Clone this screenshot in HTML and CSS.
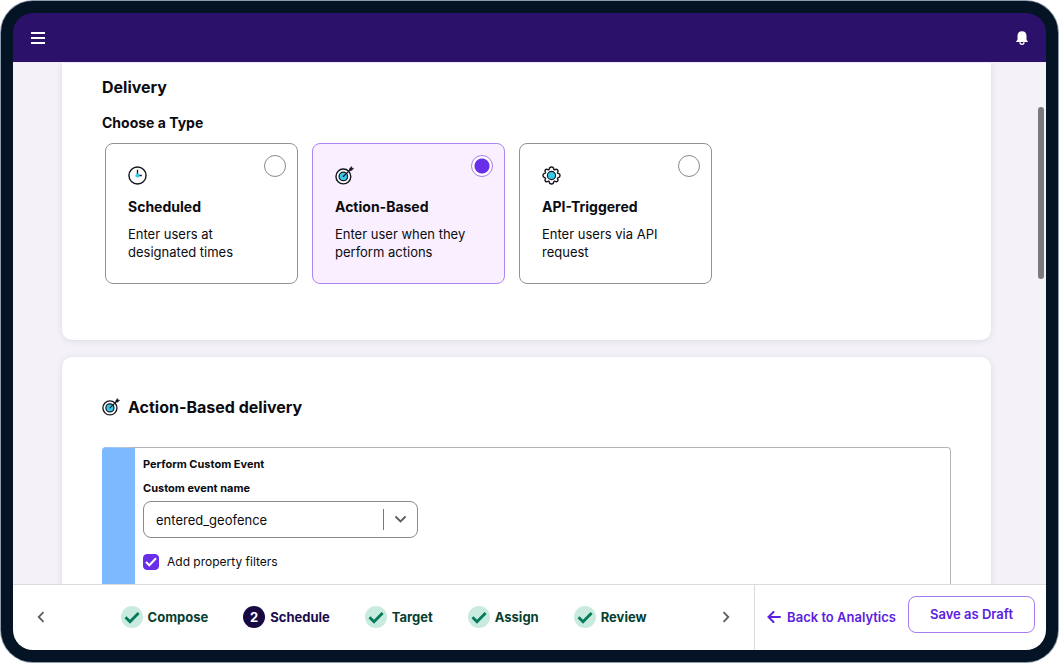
FILE: index.html
```html
<!DOCTYPE html>
<html lang="en">
<head>
<meta charset="utf-8">
<meta name="viewport" content="width=device-width, initial-scale=1.0">
<title>Schedule - Delivery</title>
<link rel="stylesheet" href="styles.css">
</head>
<body>

<!-- shared icons -->
<svg class="sprite" aria-hidden="true">
  <symbol id="icon-target" viewBox="0 0 20 20">
    <circle cx="8.8" cy="11" r="7.8" fill="#fff" stroke="#15151f" stroke-width="1.5"/>
    <circle cx="8.8" cy="11" r="4.5" fill="#38c9ea" stroke="#15151f" stroke-width="1.3"/>
    <path d="M8.8 11L16.5 3.5" stroke="#15151f" stroke-width="1.3" stroke-linecap="round"/>
    <path d="M15.5 4.5V2.5L17.5 0.7V2.5H19.4L17.6 4.5Z" fill="#15151f" stroke="#15151f" stroke-width="0.8" stroke-linejoin="round"/>
  </symbol>
  <symbol id="icon-check" viewBox="0 0 22 22">
    <circle cx="11" cy="11" r="11" fill="#c9ebdf"/>
    <path d="M4.5 11.3L9 15.7L17.6 7" fill="none" stroke="#04795b" stroke-width="2.8"/>
  </symbol>
</svg>

<div class="device">
  <header class="topbar">
    <button class="icon-btn" aria-label="Menu">
      <svg width="14" height="14" viewBox="0 0 14 14"><path d="M0 2H14M0 7H14M0 12H14" stroke="#fff" stroke-width="2"/></svg>
    </button>
    <button class="icon-btn" aria-label="Notifications">
      <svg width="12" height="14" viewBox="0 0 12 14"><path d="M6 0.3C9 0.3 10.5 2.4 10.5 4.8V8.2C10.5 9.1 10.8 9.5 11.8 10.3V11H0.2V10.3C1.2 9.5 1.5 9.1 1.5 8.2V4.8C1.5 2.4 3 0.3 6 0.3Z" fill="#fff"/><path d="M4 11.3A2 2 0 0 0 8 11.3" fill="none" stroke="#fff" stroke-width="1.3"/></svg>
    </button>
  </header>

  <main class="content">
    <section class="panel panel-first">
      <h2>Delivery</h2>
      <h3>Choose a Type</h3>
      <div class="types">
        <label class="type">
          <input type="radio" name="type">
          <svg class="type-icon" viewBox="0 0 20 20"><circle cx="10" cy="10" r="9" fill="#fff" stroke="#15151f" stroke-width="1.5"/><path d="M10 4V10H14.5" fill="none" stroke="#15151f" stroke-width="1.4"/><circle cx="10" cy="10" r="2.2" fill="#38c9ea"/></svg>
          <span class="type-title">Scheduled</span>
          <span class="type-text">Enter users at designated times</span>
        </label>
        <label class="type selected">
          <input type="radio" name="type" checked>
          <svg class="type-icon"><use href="#icon-target"/></svg>
          <span class="type-title">Action-Based</span>
          <span class="type-text">Enter user when they perform actions</span>
        </label>
        <label class="type">
          <input type="radio" name="type">
          <svg class="type-icon" viewBox="0 0 20 20"><path d="M7.7 3.2C7.8 1.5 8.3 1.1 10 1.1S12.2 1.5 12.3 3.2C12.6 4 13.1 4.1 13.8 3.7C15.2 2.9 15.6 3.2 16.5 4.1S17.3 5.3 16.5 6.5C16.2 7.1 16.3 7.5 17 7.8C18.6 8 19 8.5 19 10S18.6 12 17 12.2C16.3 12.5 16.2 13 16.5 13.5C17.3 14.8 17.2 15.2 16.3 16.1S15.2 17.1 13.8 16.3C13.1 15.9 12.6 16 12.3 16.8C12.2 18.5 11.7 18.9 10 18.9S7.8 18.5 7.7 16.8C7.4 16 6.9 15.9 6.2 16.3C4.8 17.1 4.5 16.9 3.6 16S2.7 14.8 3.5 13.5C3.8 13 3.7 12.5 3 12.2C1.4 12 1 11.5 1 10S1.4 8 3 7.8C3.7 7.5 3.8 7 3.5 6.5C2.7 5.2 2.8 4.9 3.6 4S4.8 2.9 6.2 3.7C6.9 4.1 7.4 4 7.7 3.2Z" fill="#fff" stroke="#15151f" stroke-width="1.5"/><circle cx="10" cy="10" r="4.3" fill="#38c9ea" stroke="#15151f" stroke-width="1.2"/></svg>
          <span class="type-title">API-Triggered</span>
          <span class="type-text">Enter users via API request</span>
        </label>
      </div>
    </section>

    <section class="panel">
      <h2 class="with-icon"><svg width="18" height="18"><use href="#icon-target"/></svg>Action-Based delivery</h2>
      <div class="event">
        <h4>Perform Custom Event</h4>
        <label class="field-label" for="event-name">Custom event name</label>
        <div class="select">
          <select id="event-name">
            <option>entered_geofence</option>
          </select>
          <svg class="chevron" width="11" height="7" viewBox="0 0 11 7"><path d="M1 1L5.5 5.5L10 1" fill="none" stroke="#5c5c62" stroke-width="1.8" stroke-linecap="round"/></svg>
        </div>
        <label class="check">
          <input type="checkbox" checked>
          <svg class="tick" width="12" height="10" viewBox="0 0 12 10"><path d="M1 5L4.3 8.3L11 1.3" fill="none" stroke="#fff" stroke-width="2"/></svg>
          Add property filters
        </label>
      </div>
    </section>
    <div class="scroll-thumb"></div>
  </main>

  <footer class="footer">
    <nav class="steps">
      <button class="icon-btn" aria-label="Previous"><svg width="8" height="12" viewBox="0 0 8 12"><path d="M6.5 1.2L1.7 6L6.5 10.8" fill="none" stroke="#5c5c62" stroke-width="1.8"/></svg></button>
      <ol>
        <li><a href="#"><svg width="22" height="22"><use href="#icon-check"/></svg>Compose</a></li>
        <li><a href="#" class="current"><span class="num">2</span>Schedule</a></li>
        <li><a href="#"><svg width="22" height="22"><use href="#icon-check"/></svg>Target</a></li>
        <li><a href="#"><svg width="22" height="22"><use href="#icon-check"/></svg>Assign</a></li>
        <li><a href="#"><svg width="22" height="22"><use href="#icon-check"/></svg>Review</a></li>
      </ol>
      <button class="icon-btn" aria-label="Next"><svg width="8" height="12" viewBox="0 0 8 12"><path d="M1.5 1.2L6.3 6L1.5 10.8" fill="none" stroke="#5c5c62" stroke-width="1.8"/></svg></button>
    </nav>
    <div class="actions">
      <a class="back" href="#"><svg width="14" height="12" viewBox="0 0 14 12"><path d="M6.5 1L1.5 6L6.5 11M1.5 6H13" fill="none" stroke="#5b21e0" stroke-width="2" stroke-linecap="round"/></svg>Back to Analytics</a>
      <button class="draft">Save as Draft</button>
    </div>
  </footer>
</div>

</body>
</html>
```
FILE: styles.css
```css
* {box-sizing: border-box;}
body {
  margin: 0;
  height: 100vh;
  padding: 1px 2px 1px 1px;
  background: #fff;
  font-family: Inter, "Liberation Sans", sans-serif;
  font-size: 13px;
  color: #0b0b10;
}
h2, h3, h4 {
  margin: 0;
  font-weight: 650;
}
h2 {
  font-size: 16px;
  line-height: 24px;
}
h3 {
  margin-top: 14px;
  font-size: 14px;
  line-height: 20px;
}
h4, .field-label {
  font-size: 11px;
  font-weight: 700;
  line-height: 16px;
}
svg {display: block;}
a {text-decoration: none;}
button, select {
  font: inherit;
  cursor: pointer;
}
.sprite {
  position: absolute;
  width: 0;
  height: 0;
}
.device {
  display: flex;
  flex-direction: column;
  height: 100%;
  border: 12px solid #041424;
  border-radius: 32px;
  box-shadow: 0 0 0 1px #8c9cab;
  background: #041424;
}
.icon-btn {
  padding: 0;
  border: 0;
  background: none;
}

/* top bar */
.topbar {
  display: flex;
  flex: none;
  justify-content: space-between;
  align-items: center;
  height: 49px;
  padding: 0 18px;
  background: #2c116b;
  border-radius: 20px 20px 0 0;
}

/* scrolling area */
.content {
  position: relative;
  flex: 1;
  min-height: 0;
  overflow: hidden;
  padding: 0 55px 0 49px;
  border-top: 1px solid #f1eafb;
  background: #f4f2f8;
}
.scroll-thumb {
  position: absolute;
  top: 44px;
  right: 2px;
  width: 6px;
  height: 172px;
  border-radius: 3px;
  background: #7b797f;
}
.panel {
  padding: 38px 40px 60px;
  border-radius: 10px;
  background: #fff;
  box-shadow: 0 1px 6px rgba(60,40,90,0.12);
}
.panel-first {
  margin-bottom: 17px;
  padding: 12px 40px 56px;
  border-radius: 0 0 10px 10px;
}

/* delivery types */
.types {
  display: grid;
  grid-template-columns: repeat(3, 193px);
  gap: 14px;
  margin: 10px 3px 0;
}
.type {
  position: relative;
  height: 141px;
  padding: 22px;
  border: 1px solid #929296;
  border-radius: 8px;
  cursor: pointer;
}
.type.selected {
  border-color: #ad85f5;
  background: #f9effe;
}
.type input {
  position: absolute;
  top: 11px;
  right: 11px;
  width: 22px;
  height: 22px;
  margin: 0;
  appearance: none;
  border: 1px solid #89898d;
  border-radius: 50%;
  background: #fff;
}
.type input:checked {
  border-color: #a67bf3;
  background: #fff radial-gradient(circle, #682ee8 7px, #fff 8px);
}
.type-icon {
  width: 19px;
  height: 19px;
}
.type-title {
  display: block;
  margin-top: 12px;
  font-size: 14px;
  font-weight: 700;
  line-height: 20px;
}
.type-text {
  display: block;
  margin-top: 8px;
  line-height: 18px;
}

/* custom event */
.with-icon {
  display: flex;
  align-items: center;
  gap: 8px;
}
.event {
  height: 180px;
  margin-top: 28px;
  padding: 8px;
  border: 1px solid #b5b2b9;
  border-left: 33px solid #7db9ff;
  border-radius: 4px;
}
.field-label {
  display: block;
  margin-top: 8px;
}
.select {
  position: relative;
  width: 275px;
  margin-top: 5px;
}
.select select {
  width: 100%;
  height: 37px;
  padding: 0 44px 0 12px;
  appearance: none;
  border: 1px solid #88888e;
  border-radius: 8px;
  background: #fff;
  color: inherit;
}
.select::after {
  content: "";
  position: absolute;
  top: 8px;
  right: 34px;
  height: 21px;
  border-left: 1px solid #77777d;
}
.select .chevron {
  position: absolute;
  top: 15px;
  right: 12px;
  pointer-events: none;
}
.check {
  position: relative;
  display: flex;
  align-items: center;
  gap: 8px;
  margin-top: 15px;
  font-size: 12px;
  line-height: 18px;
}
.check input {
  width: 16px;
  height: 16px;
  margin: 0;
  appearance: none;
  border: 1px solid #682ee8;
  border-radius: 4px;
}
.check input:checked {background: #682ee8;}
.check .tick {
  position: absolute;
  top: 4px;
  left: 2px;
}

/* footer */
.footer {
  display: flex;
  flex: none;
  height: 66px;
  border-top: 1px solid #dcdadf;
  border-radius: 0 0 20px 20px;
  background: #fff;
}
.steps {
  display: flex;
  flex: 1;
  justify-content: space-between;
  align-items: center;
  padding: 0 24px 1px;
}
.steps ol {
  display: flex;
  gap: 35px;
  margin: 0;
  padding: 0;
  list-style: none;
}
.steps a {
  display: flex;
  align-items: center;
  gap: 5px;
  color: #06402f;
  font-weight: 650;
}
.steps .current {color: #1c0b4d;}
.num {
  width: 22px;
  border-radius: 50%;
  background: #180943;
  color: #fff;
  line-height: 22px;
  text-align: center;
}
.actions {
  display: flex;
  align-items: center;
  gap: 12px;
  padding: 0 11px 1px 12px;
  border-left: 1px solid #dcdadf;
}
.back {
  display: flex;
  align-items: center;
  gap: 6px;
  color: #5b21e0;
  font-weight: 600;
}
.draft {
  width: 127px;
  height: 37px;
  margin-bottom: 6px;
  padding: 0;
  border: 1px solid #a67bf3;
  border-radius: 8px;
  background: #fff;
  color: #5b21e0;
  font-weight: 600;
}
```
